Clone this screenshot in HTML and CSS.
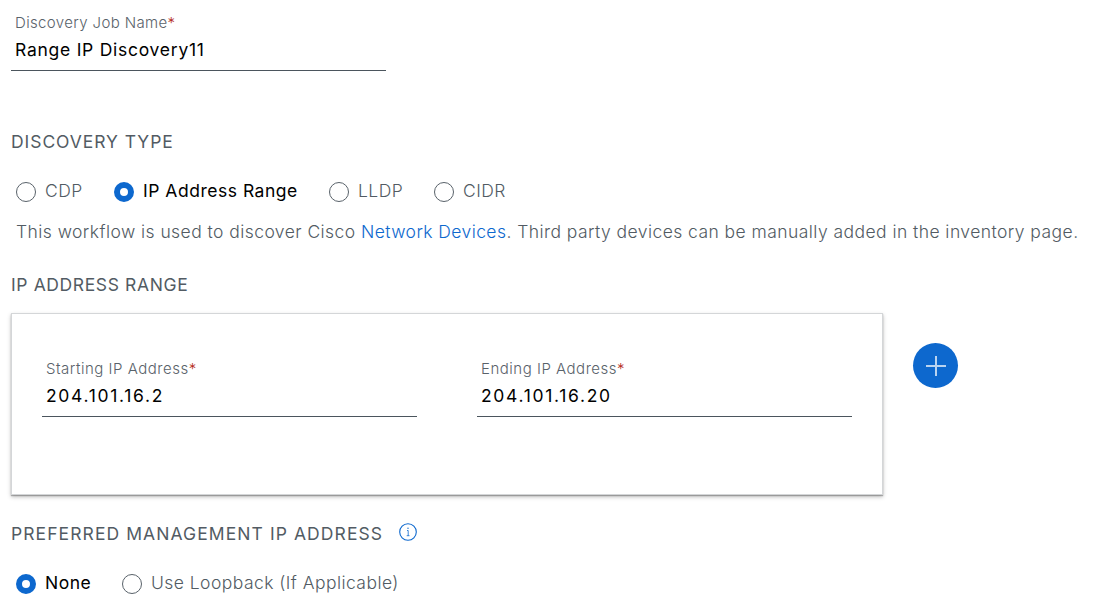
FILE: index.html
```html
<!DOCTYPE html>
<html lang="en">
<head>
<meta charset="utf-8">
<title>Discovery</title>
<link rel="stylesheet" href="styles.css">
</head>
<body>
<main class="page">
  <div class="field">
    <div class="label job-label">Discovery Job Name<span class="req">*</span></div>
    <div class="value">Range IP Discovery11</div>
  </div>

  <h2 class="heading type-heading">DISCOVERY TYPE</h2>
  <div class="radios">
    <div class="option o-cdp"><span class="dot"></span><span class="name">CDP</span></div>
    <div class="option selected o-range"><span class="dot"></span><span class="name">IP Address Range</span></div>
    <div class="option o-lldp"><span class="dot"></span><span class="name">LLDP</span></div>
    <div class="option"><span class="dot"></span><span class="name">CIDR</span></div>
  </div>
  <p class="note">This workflow is used to discover Cisco <a class="link">Network Devices</a>. Third party devices can be manually added in the inventory page.</p>

  <h2 class="heading range-heading">IP ADDRESS RANGE</h2>
  <div class="range-row">
    <section class="card">
      <div class="field">
        <div class="label">Starting IP Address<span class="req">*</span></div>
        <div class="value ip">204.101.16.2</div>
      </div>
      <div class="field">
        <div class="label">Ending IP Address<span class="req">*</span></div>
        <div class="value ip">204.101.16.20</div>
      </div>
    </section>
    <div class="add">
      <svg width="45" height="45" viewBox="0 0 45 45" fill="none" stroke="#b9d3f0" stroke-width="2"><path d="M13 23H33M23 13V33"/></svg>
    </div>
  </div>

  <div class="pref">
    <h2 class="heading pref-heading">PREFERRED MANAGEMENT IP ADDRESS</h2>
    <svg class="info" width="18" height="18" viewBox="0 0 18 18" fill="none" stroke="#0d68ce"><circle cx="9" cy="9" r="8.3" stroke-width="1.1"/><path d="M8 7.5H9.2V12.7M7.7 12.7H10.5" stroke-width=".8"/><circle cx="9" cy="5.2" r=".7" fill="#0d68ce" stroke="none"/></svg>
  </div>
  <div class="radios">
    <div class="option selected o-none"><span class="dot"></span><span class="name">None</span></div>
    <div class="option"><span class="dot"></span><span class="name">Use Loopback (If Applicable)</span></div>
  </div>
</main>
</body>
</html>
```
FILE: styles.css
```css
* { box-sizing: border-box; }
body { margin: 0; background: #fff; color: #525b63; font-family: Inter, "Liberation Sans", sans-serif; font-size: 17.5px; }
.page { width: 1099px; height: 615px; padding: 12px 0 0 11px; overflow: hidden; }
.field { width: 375px; height: 59px; padding-left: 4px; border-bottom: 1px solid #4b555d; white-space: nowrap; }
.label { height: 22px; font-size: 15px; font-weight: 300; line-height: 22px; letter-spacing: .51px; color: #59626a; }
.job-label { letter-spacing: .36px; }
.req { letter-spacing: 0; color: #b52b20; font-weight: 300; }
.value { height: 30px; line-height: 32px; font-weight: 400; letter-spacing: .74px; color: #000; }
.ip { letter-spacing: 1.68px; }
.heading { margin: 0; height: 24px; font-size: 17.5px; font-weight: 400; line-height: 24px; letter-spacing: .62px; color: #525b63; white-space: nowrap; }
.type-heading { margin-top: 59px; letter-spacing: .94px; }
.pref-heading { letter-spacing: 1.08px; }
.radios { display: flex; height: 24px; margin-top: 26px; padding-left: 5px; }
.option { display: flex; align-items: center; gap: 9px; height: 24px; white-space: nowrap; }
.dot { flex: none; width: 20px; height: 20px; border: 1.5px solid #59626a; border-radius: 50%; }
.selected .dot { border: 6px solid #0d68ce; }
.name { font-weight: 300; letter-spacing: .45px; line-height: 22px; padding-bottom: 2px; }
.selected .name { font-weight: 400; letter-spacing: .52px; color: #000; }
.o-cdp { width: 98px; }
.o-range { width: 215px; }
.o-lldp { width: 105px; }
.o-none { width: 106px; }
.note { margin: 16px 0 0 5px; height: 24px; line-height: 24px; font-weight: 300; letter-spacing: .44px; white-space: nowrap; }
.link { color: #0d68ce; font-weight: 300; letter-spacing: .42px; }
.range-heading { margin-top: 29px; }
.range-row { display: flex; gap: 30px; margin-top: 16px; }
.card { display: flex; gap: 60px; width: 872px; height: 182px; padding: 44px 30px 0; border: 1px solid #d4d6d8; box-shadow: 0 2px 4px rgba(0,0,0,.25), 0 1px 1px rgba(0,0,0,.25); }
.add { width: 45px; height: 45px; margin-top: 30px; border-radius: 50%; background: #0d68ce; }
.add svg { display: block; }
.pref { display: flex; gap: 16px; margin-top: 27px; }
.info { margin-top: 1px; }
```
